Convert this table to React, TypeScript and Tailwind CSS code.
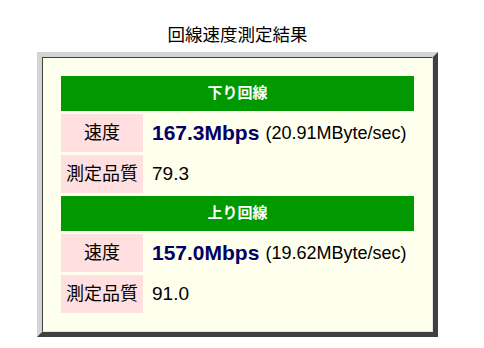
import React from 'react';

type Line = {
  title: string;
  mbps: string;
  mbyte: string;
  quality: string;
};

const lines: Line[] = [
  { title: '下り回線', mbps: '167.3Mbps', mbyte: '(20.91MByte/sec)', quality: '79.3' },
  { title: '上り回線', mbps: '157.0Mbps', mbyte: '(19.62MByte/sec)', quality: '91.0' },
];

const font = { fontFamily: '"Liberation Sans", "Noto Sans CJK JP", sans-serif' };

const Label: React.FC<{ children: React.ReactNode }> = ({ children }) => (
  <div className="bg-[#ffdfdf] h-[38px] flex items-center justify-center text-[18px] text-black">
    {children}
  </div>
);

const App: React.FC = () => {
  return (
    <div className="w-[484px] h-[348px] bg-white" style={font}>
      <div className="ml-[37px] w-[401px]">
        <h1 className="h-[52px] pt-[25px] text-center text-[17.5px] leading-[20px] font-normal text-black">
          回線速度測定結果
        </h1>

        {/* outset frame around the result table */}
        <div className="border-[5px] border-t-[#d4d4d4] border-l-[#d4d4d4] border-r-[#404040] border-b-[#404040]">
          <div className="border border-t-[#404040] border-l-[#404040] border-r-[#e4e4e4] border-b-[#e4e4e4] bg-[#ffffee] p-[18px]">
            <div className="grid grid-cols-[82px_1fr] gap-[3px]">
              {lines.map((line) => (
                <React.Fragment key={line.title}>
                  <div className="col-span-2 h-[35px] bg-[#009900] flex items-center justify-center text-white font-bold text-[15px]">
                    {line.title}
                  </div>
                  <Label>速度</Label>
                  <div className="h-[38px] flex items-center pl-[6px] whitespace-nowrap">
                    <span className="text-[#000066] font-bold text-[21px]">{line.mbps}</span>
                    <span className="ml-[6px] text-[18px] text-black">{line.mbyte}</span>
                  </div>
                  <Label>測定品質</Label>
                  <div className="h-[38px] flex items-center pl-[6px] text-[19px] text-black">
                    {line.quality}
                  </div>
                </React.Fragment>
              ))}
            </div>
          </div>
        </div>
      </div>
    </div>
  );
};

export default App;
